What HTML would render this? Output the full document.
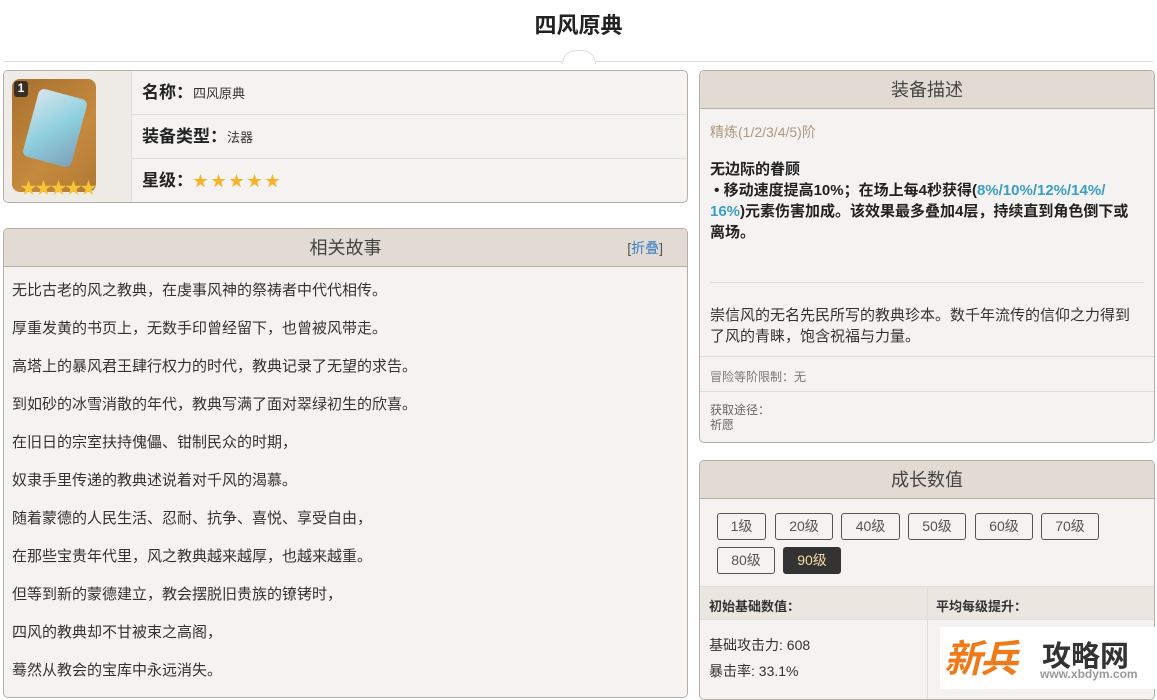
<!DOCTYPE html>
<html><head><meta charset="utf-8"><style>
*{margin:0;padding:0;box-sizing:border-box}
body{width:1157px;height:689px;overflow:hidden;background:#fff;font-family:"Liberation Sans","Noto Sans CJK SC",sans-serif;color:#333;position:relative}
.abs{position:absolute}
h1{position:absolute;left:0;width:1157px;top:8px;text-align:center;font-size:22px;font-weight:bold;color:#222}
.line{position:absolute;left:4px;right:4px;top:61px;height:1px;background:#ddd}
.box{position:absolute;border:1px solid #b9aea3;border-radius:5px;background:#f4f3f2;overflow:hidden}
.hd{height:38px;background:#e2dbd3;border-bottom:1px solid #b9aea3;text-align:center;line-height:38px;font-size:18px;color:#444}
.row{position:absolute;left:128px;right:0;height:44px;border-bottom:1px solid #ddd;padding-left:10px;line-height:44px;font-size:13px}
.row b{font-size:17px;color:#222}
.story p{position:absolute;left:8px;font-size:15px;color:#333}
.btn{position:absolute;height:27px;border:1px solid #555;border-radius:3px;text-align:center;line-height:25px;font-size:14px;color:#555;background:#f4f3f2}
.star{color:#f5b32a;font-size:15px;letter-spacing:3px}
</style></head><body>
<h1>四风原典</h1>
<div class="line"></div>
<div class="abs" style="left:562px;top:50px;width:34px;height:14px;border:1px solid #ddd;border-bottom:none;border-radius:17px 17px 0 0;background:#fff"></div>

<div class="box" style="left:3px;top:70px;width:685px;height:133px">
 <div class="abs" style="left:0;top:0;width:128px;height:133px;border-right:1px solid #ddd;background:#efece8"></div>
 <div class="abs" style="left:8px;top:8px;width:84px;height:113px;border-radius:8px;background:linear-gradient(135deg,#a8702f,#c58a3e 60%,#b07834)"></div>
 <div class="abs" style="left:26px;top:22px;width:50px;height:70px;border-radius:6px;background:linear-gradient(135deg,#d8e6ee,#8fd0de 50%,#7da0b8);transform:rotate(15deg)"></div>
 <div class="abs" style="left:10px;top:10px;width:14px;height:16px;background:#3a2f25;color:#fff;font-size:12px;font-weight:bold;text-align:center;border-radius:3px">1</div>
 <div class="abs" style="left:16px;top:103px;color:#f8c437;font-size:17px;letter-spacing:-2px">★★★★★</div>
 <div class="row" style="top:0"><b>名称：</b>四风原典</div>
 <div class="row" style="top:44px"><b>装备类型：</b>法器</div>
 <div class="row" style="top:88px;border:none"><b>星级：</b><span class="star">★★★★★</span></div>
</div>

<div class="box story" style="left:3px;top:228px;width:685px;height:470px">
 <div class="hd">相关故事<span class="abs" style="right:24px;top:0;font-size:14px;color:#555">[<span style="color:#3a7fc4">折叠</span>]</span></div>
 <p style="top:50px">无比古老的风之教典，在虔事风神的祭祷者中代代相传。</p>
 <p style="top:88px">厚重发黄的书页上，无数手印曾经留下，也曾被风带走。</p>
 <p style="top:126px">高塔上的暴风君王肆行权力的时代，教典记录了无望的求告。</p>
 <p style="top:164px">到如砂的冰雪消散的年代，教典写满了面对翠绿初生的欣喜。</p>
 <p style="top:202px">在旧日的宗室扶持傀儡、钳制民众的时期，</p>
 <p style="top:240px">奴隶手里传递的教典述说着对千风的渴慕。</p>
 <p style="top:278px">随着蒙德的人民生活、忍耐、抗争、喜悦、享受自由，</p>
 <p style="top:316px">在那些宝贵年代里，风之教典越来越厚，也越来越重。</p>
 <p style="top:354px">但等到新的蒙德建立，教会摆脱旧贵族的镣铐时，</p>
 <p style="top:392px">四风的教典却不甘被束之高阁，</p>
 <p style="top:430px">蓦然从教会的宝库中永远消失。</p>
</div>

<div class="box" style="left:699px;top:70px;width:456px;height:373px">
 <div class="hd">装备描述</div>
 <div class="abs" style="left:10px;top:51px;font-size:14px;color:#b09880">精炼(1/2/3/4/5)阶</div>
 <div class="abs" style="left:10px;top:88px;width:445px;font-size:15px;font-weight:bold;color:#222;line-height:21px;white-space:nowrap">无边际的眷顾<br>&nbsp;• 移动速度提高10%；在场上每4秒获得(<span style="color:#3a9fc4">8%/10%/12%/14%/</span><br><span style="color:#3a9fc4">16%</span>)元素伤害加成。该效果最多叠加4层，持续直到角色倒下或<br>离场。</div>
 <div class="abs" style="left:10px;right:10px;top:211px;height:1px;background:#ddd"></div>
 <div class="abs" style="left:10px;top:234px;width:440px;font-size:15px;line-height:21px;white-space:nowrap">崇信风的无名先民所写的教典珍本。数千年流传的信仰之力得到<br>了风的青睐，饱含祝福与力量。</div>
 <div class="abs" style="left:0;right:0;top:285px;height:1px;background:#ddd"></div>
 <div class="abs" style="left:10px;top:297px;font-size:12px;color:#777">冒险等阶限制：无</div>
 <div class="abs" style="left:0;right:0;top:320px;height:1px;background:#ddd"></div>
 <div class="abs" style="left:10px;top:332px;font-size:12px;color:#666;line-height:15px">获取途径：<br>祈愿</div>
</div>

<div class="box" style="left:699px;top:460px;width:456px;height:240px">
 <div class="hd">成长数值</div>
 <div class="btn" style="left:17px;top:52px;width:49px">1级</div>
 <div class="btn" style="left:75px;top:52px;width:58px">20级</div>
 <div class="btn" style="left:141px;top:52px;width:59px">40级</div>
 <div class="btn" style="left:208px;top:52px;width:58px">50级</div>
 <div class="btn" style="left:275px;top:52px;width:58px">60级</div>
 <div class="btn" style="left:341px;top:52px;width:58px">70级</div>
 <div class="btn" style="left:17px;top:86px;width:58px">80级</div>
 <div class="btn" style="left:83px;top:86px;width:58px;background:#333;color:#f3d9a8;border-color:#333">90级</div>
 <div class="abs" style="left:0;right:0;top:125px;height:34px;background:#ebe6e0;border-top:1px solid #ddd;border-bottom:1px solid #ddd"></div>
 <div class="abs" style="left:227px;top:125px;width:1px;height:120px;background:#ddd"></div>
 <div class="abs" style="left:9px;top:135px;font-size:13px;font-weight:bold">初始基础数值：</div>
 <div class="abs" style="left:236px;top:135px;font-size:13px;font-weight:bold">平均每级提升：</div>
 <div class="abs" style="left:9px;top:171px;font-size:14px;line-height:26px">基础攻击力: 608<br>暴击率: 33.1%</div>
</div>

<div class="abs" style="left:940px;top:627px;width:217px;height:62px;background:#fff"></div>
<div class="abs" style="left:944px;top:628px;font-size:38px;font-weight:bold;color:#f07a18;font-style:italic;letter-spacing:-2px">新兵</div>
<div class="abs" style="left:1042px;top:633px;font-size:29px;font-weight:bold;color:#333">攻略网</div>
<div class="abs" style="left:1040px;top:667px;font-size:12px;font-weight:bold;color:#999">www.xbdym.com</div>
</body></html>
